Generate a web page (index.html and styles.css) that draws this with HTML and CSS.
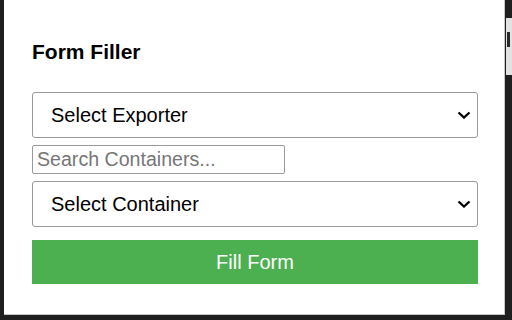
FILE: index.html
```html
<!DOCTYPE html>
<html lang="en">
<head>
<meta charset="utf-8">
<title>Form Filler</title>
<link rel="stylesheet" href="styles.css">
</head>
<body>
  <div class="panel">
    <h1 class="title">Form Filler</h1>
    <div class="form">
      <select class="select">
        <option>Select Exporter</option>
      </select>
      <input class="search" type="text" placeholder="Search Containers...">
      <select class="select">
        <option>Select Container</option>
      </select>
      <button class="fill-btn" type="button">Fill Form</button>
    </div>
  </div>
  <div class="side">
    <div class="side-block"><div class="side-mark"></div></div>
  </div>
</body>
</html>
```

FILE: styles.css
```css
* { box-sizing: border-box; }

html, body {
  margin: 0;
  height: 320px;
  overflow: hidden;
}

body {
  background: #1f1f1f;
  display: flex;
  align-items: flex-start;
  padding-left: 4px;
  font-family: "Liberation Sans", Arial, sans-serif;
  color: #000;
}

.panel {
  width: 501px;
  height: 315px;
  background: #fff;
  border-right: 1px solid #c6c6c6;
  border-bottom: 1px solid #c6c6c6;
  padding: 40px 0 0 28px;
  flex: none;
}

.title {
  margin: 0 0 29px;
  font-size: 21px;
  line-height: 23px;
  font-weight: bold;
}

.form {
  width: 446px;
  display: flex;
  flex-direction: column;
  gap: 7px;
}

.select {
  appearance: none;
  -webkit-appearance: none;
  width: 446px;
  height: 46px;
  border: 1px solid #9a9a9a;
  border-radius: 3px;
  background: #fff url("data:image/svg+xml,%3Csvg xmlns='http://www.w3.org/2000/svg' width='14' height='8' viewBox='0 0 14 8'%3E%3Cpath d='M1.5 1.5 L7 6.5 L12.5 1.5' fill='none' stroke='%23000' stroke-width='2.3'/%3E%3C/svg%3E") no-repeat right 6px center;
  padding: 0 0 0 18px;
  font-family: inherit;
  font-size: 20px;
  color: #000;
  outline: none;
}

.search {
  width: 253px;
  height: 29px;
  border: 1px solid #9a9a9a;
  border-radius: 2px;
  padding: 0 4px;
  font-family: inherit;
  font-size: 19.6px;
  color: #000;
  outline: none;
}

.search::placeholder { color: #767676; }

.fill-btn {
  margin-top: 6px;
  height: 44px;
  width: 446px;
  border: none;
  border-radius: 0;
  background: #4caf50;
  color: #fff;
  font-family: inherit;
  font-size: 20px;
  padding: 0;
}

.side {
  flex: 1;
  padding-top: 18px;
}

.side-block {
  height: 57px;
  margin-left: 1px;
  background: #e2e2e2;
  padding-top: 14px;
}

.side-mark {
  width: 3px;
  height: 15px;
  margin-left: 1px;
  background: #2a2a2a;
}
```
